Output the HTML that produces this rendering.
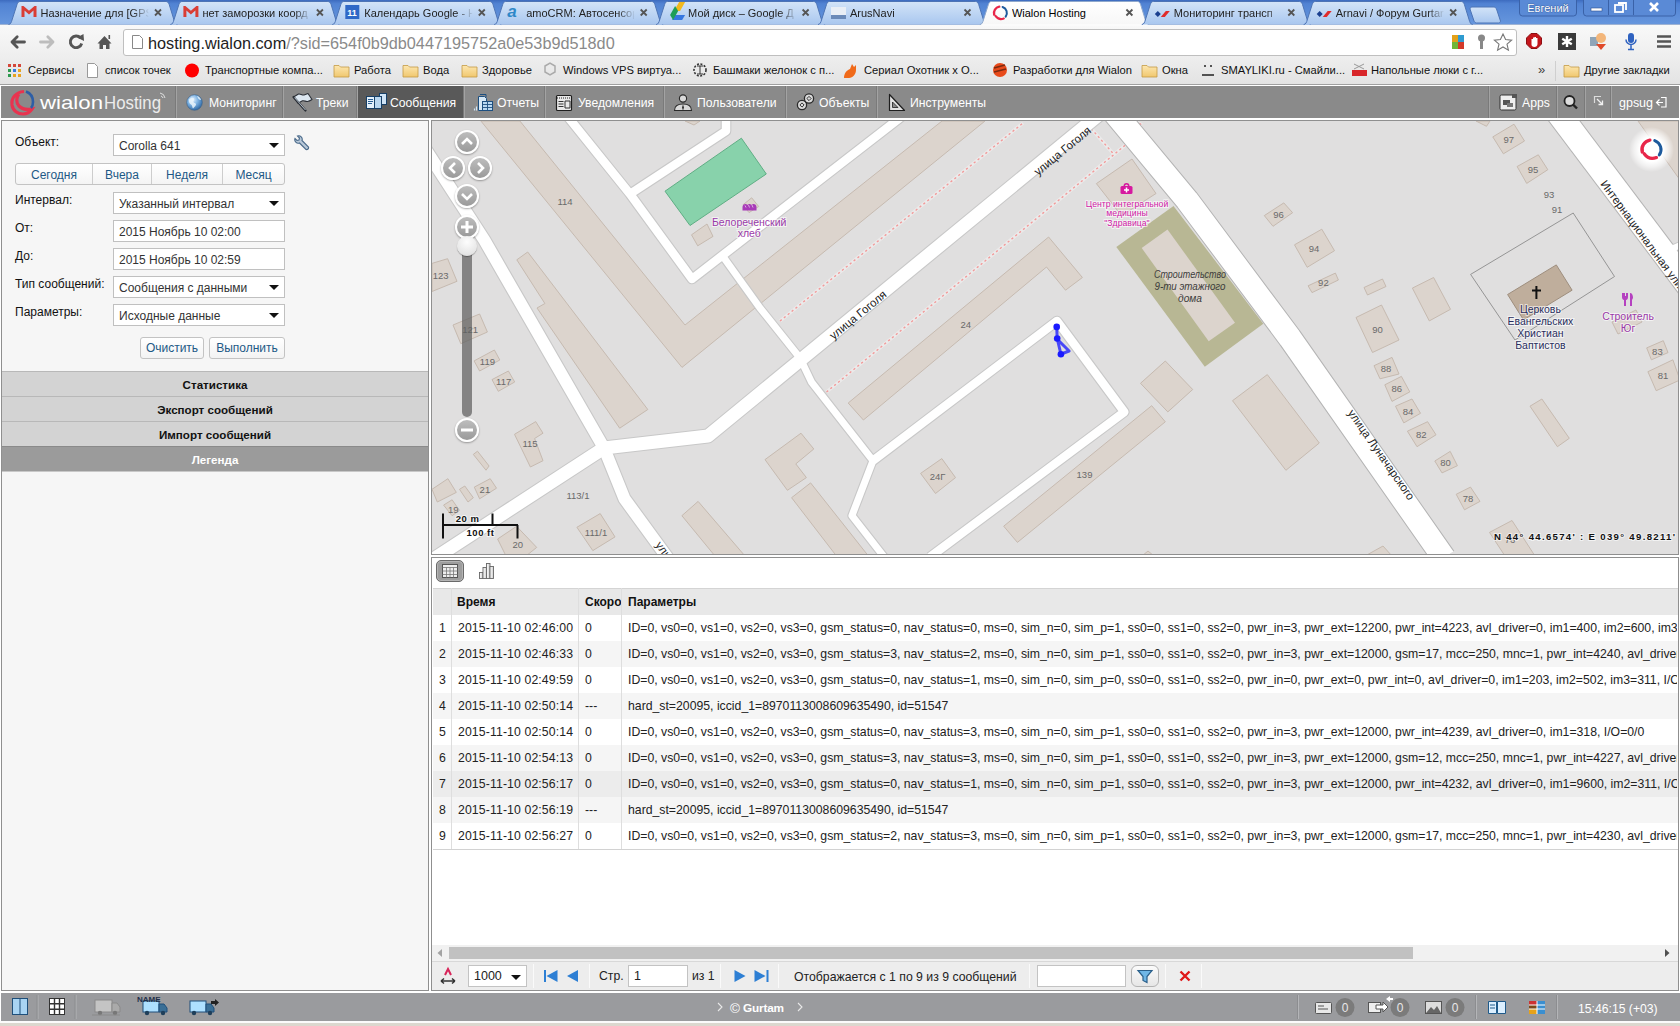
<!DOCTYPE html>
<html><head><meta charset="utf-8">
<style>
*{margin:0;padding:0;box-sizing:border-box}
html,body{width:1680px;height:1026px;overflow:hidden;background:#fff;font-family:"Liberation Sans",sans-serif;font-size:12px;color:#000}
svg text{font-family:"Liberation Sans",sans-serif}
.a{position:absolute}
.lbl{position:absolute;left:15px;font-size:12px;color:#111;white-space:nowrap}
.sel{position:absolute;left:113px;width:172px;height:22px;background:#fff;border:1px solid #c0c0c0;font-size:12px;color:#333;line-height:22px;padding-left:5px;white-space:nowrap}
.sel .arr{position:absolute;right:5px;top:8px;width:0;height:0;border-left:5px solid transparent;border-right:5px solid transparent;border-top:5px solid #111}
.btn{position:absolute;height:22px;border:1px solid #c3c3c3;border-radius:3px;background:linear-gradient(#ffffff,#f3f3f3);color:#1d5986;font-size:12px;line-height:21px;text-align:center;white-space:nowrap}
.acc{position:absolute;left:2px;width:426px;height:25px;background:#d3d3d3;border-top:1px solid #b8b8b8;font-weight:bold;font-size:11.6px;text-align:center;line-height:26px;color:#111}
.th{font-weight:bold;font-size:12px;color:#111;white-space:nowrap}
.td{font-size:12.25px;color:#222;white-space:nowrap}
.pb{position:absolute;width:24px;height:24px;border-radius:50%;background:linear-gradient(#bdbdbd,#9a9a9a);border:2px solid #fff;box-shadow:0 1px 2px rgba(0,0,0,.35)}
.pb svg{position:absolute;left:-2px;top:-2px}
.sep{position:absolute;width:1px;background:#d0d0d0;border-right:1px solid #fafafa}
.badge{position:absolute;width:19px;height:19px;border-radius:50%;background:#7d7d7d;color:#e8e8e8;font-size:12px;text-align:center;line-height:19px}
</style></head><body>

<svg class="a" style="left:0;top:0" width="1680" height="57" viewBox="0 0 1680 57">
<defs><linearGradient id="fr" x1="0" y1="0" x2="0" y2="1"><stop offset="0" stop-color="#3d6bbf"/><stop offset=".15" stop-color="#5183d3"/><stop offset="1" stop-color="#6797de"/></linearGradient><linearGradient id="tb" x1="0" y1="0" x2="0" y2="1"><stop offset="0" stop-color="#d3e4f8"/><stop offset="1" stop-color="#a9c7ef"/></linearGradient><linearGradient id="ta" x1="0" y1="0" x2="0" y2="1"><stop offset="0" stop-color="#ffffff"/><stop offset="1" stop-color="#f7f7f7"/></linearGradient><linearGradient id="fade" x1="0" y1="0" x2="1" y2="0"><stop offset="0" stop-color="#bcd5f4" stop-opacity="0"/><stop offset="1" stop-color="#bcd5f4" stop-opacity="1"/></linearGradient><linearGradient id="tbar" x1="0" y1="0" x2="0" y2="1"><stop offset="0" stop-color="#f9f9f9"/><stop offset="1" stop-color="#eeeeee"/></linearGradient></defs>
<rect x="0" y="0" width="1680" height="25" fill="url(#fr)"/>
<rect x="0" y="24" width="1680" height="33" fill="url(#tbar)"/>
<rect x="0" y="24" width="1680" height="1" fill="#9fb3d3"/>
<path d="M8.5,24.5 C10.5,24.5 11.5,22 12.0,20 L17.0,4.5 C17.7,2.5 18.5,1.5 20.0,1.5 L166.0,1.5 C167.5,1.5 168.5,2.5 169.2,4.5 L174.0,20 C174.5,22 175.5,24.5 177.5,24.5" fill="url(#tb)" stroke="#4d74b5" stroke-width="1"/>
<path d="M21.5,6 v11 h3 v-6.5 l4.5,4 4.5,-4 v6.5 h3 v-11 h-2 l-5.5,4.8 -5.5,-4.8z" fill="#d93d35"/>
<defs><linearGradient id="mg0" gradientUnits="userSpaceOnUse" x1="132.5" y1="0" x2="149.5" y2="0"><stop offset="0" stop-color="#fff"/><stop offset="1" stop-color="#000"/></linearGradient><mask id="mk0" maskUnits="userSpaceOnUse" x="0" y="0" width="1680" height="25"><rect x="38.5" y="0" width="120" height="25" fill="url(#mg0)"/></mask></defs>
<text x="40.5" y="16.5" font-size="11" fill="#222" clip-path="url(#tc0)" mask="url(#mk0)">Назначение для [GPS</text>
<defs><linearGradient id="fd0" x1="0" y1="0" x2="1" y2="0"><stop offset=".8" stop-color="#fff"/><stop offset="1" stop-color="#fff" stop-opacity="0"/></linearGradient><clipPath id="tc0"><rect x="40.5" y="0" width="108" height="25"/></clipPath></defs>
<path d="M155.0,9.5 l6,6 M161.0,9.5 l-6,6" stroke="#555" stroke-width="1.8"/>
<path d="M170.4,24.5 C172.4,24.5 173.4,22 173.9,20 L178.9,4.5 C179.6,2.5 180.4,1.5 181.9,1.5 L327.9,1.5 C329.4,1.5 330.4,2.5 331.1,4.5 L335.9,20 C336.4,22 337.4,24.5 339.4,24.5" fill="url(#tb)" stroke="#4d74b5" stroke-width="1"/>
<path d="M183.4,6 v11 h3 v-6.5 l4.5,4 4.5,-4 v6.5 h3 v-11 h-2 l-5.5,4.8 -5.5,-4.8z" fill="#d93d35"/>
<defs><linearGradient id="mg1" gradientUnits="userSpaceOnUse" x1="294.4" y1="0" x2="311.4" y2="0"><stop offset="0" stop-color="#fff"/><stop offset="1" stop-color="#000"/></linearGradient><mask id="mk1" maskUnits="userSpaceOnUse" x="0" y="0" width="1680" height="25"><rect x="200.4" y="0" width="120" height="25" fill="url(#mg1)"/></mask></defs>
<text x="202.4" y="16.5" font-size="11" fill="#222" clip-path="url(#tc1)" mask="url(#mk1)">нет заморозки коорд</text>
<defs><linearGradient id="fd1" x1="0" y1="0" x2="1" y2="0"><stop offset=".8" stop-color="#fff"/><stop offset="1" stop-color="#fff" stop-opacity="0"/></linearGradient><clipPath id="tc1"><rect x="202.4" y="0" width="108" height="25"/></clipPath></defs>
<path d="M316.9,9.5 l6,6 M322.9,9.5 l-6,6" stroke="#555" stroke-width="1.8"/>
<path d="M332.3,24.5 C334.3,24.5 335.3,22 335.8,20 L340.8,4.5 C341.5,2.5 342.3,1.5 343.8,1.5 L489.8,1.5 C491.3,1.5 492.3,2.5 493.0,4.5 L497.8,20 C498.3,22 499.3,24.5 501.3,24.5" fill="url(#tb)" stroke="#4d74b5" stroke-width="1"/>
<rect x="345.3" y="5" width="14" height="14" fill="#2f68c7"/><text x="347.3" y="16" font-size="9" fill="#fff" font-weight="bold">11</text>
<defs><linearGradient id="mg2" gradientUnits="userSpaceOnUse" x1="456.3" y1="0" x2="473.3" y2="0"><stop offset="0" stop-color="#fff"/><stop offset="1" stop-color="#000"/></linearGradient><mask id="mk2" maskUnits="userSpaceOnUse" x="0" y="0" width="1680" height="25"><rect x="362.3" y="0" width="120" height="25" fill="url(#mg2)"/></mask></defs>
<text x="364.3" y="16.5" font-size="11" fill="#222" clip-path="url(#tc2)" mask="url(#mk2)">Календарь Google - Н</text>
<defs><linearGradient id="fd2" x1="0" y1="0" x2="1" y2="0"><stop offset=".8" stop-color="#fff"/><stop offset="1" stop-color="#fff" stop-opacity="0"/></linearGradient><clipPath id="tc2"><rect x="364.3" y="0" width="108" height="25"/></clipPath></defs>
<path d="M478.8,9.5 l6,6 M484.8,9.5 l-6,6" stroke="#555" stroke-width="1.8"/>
<path d="M494.2,24.5 C496.2,24.5 497.2,22 497.7,20 L502.7,4.5 C503.4,2.5 504.2,1.5 505.7,1.5 L651.7,1.5 C653.2,1.5 654.2,2.5 654.9,4.5 L659.7,20 C660.2,22 661.2,24.5 663.2,24.5" fill="url(#tb)" stroke="#4d74b5" stroke-width="1"/>
<text x="507.20000000000005" y="17" font-size="17" fill="#2f88c8" font-style="italic" font-weight="bold">a</text>
<defs><linearGradient id="mg3" gradientUnits="userSpaceOnUse" x1="618.2" y1="0" x2="635.2" y2="0"><stop offset="0" stop-color="#fff"/><stop offset="1" stop-color="#000"/></linearGradient><mask id="mk3" maskUnits="userSpaceOnUse" x="0" y="0" width="1680" height="25"><rect x="524.2" y="0" width="120" height="25" fill="url(#mg3)"/></mask></defs>
<text x="526.2" y="16.5" font-size="11" fill="#222" clip-path="url(#tc3)" mask="url(#mk3)">amoCRM: Автосенсор</text>
<defs><linearGradient id="fd3" x1="0" y1="0" x2="1" y2="0"><stop offset=".8" stop-color="#fff"/><stop offset="1" stop-color="#fff" stop-opacity="0"/></linearGradient><clipPath id="tc3"><rect x="526.2" y="0" width="108" height="25"/></clipPath></defs>
<path d="M640.7,9.5 l6,6 M646.7,9.5 l-6,6" stroke="#555" stroke-width="1.8"/>
<path d="M656.1,24.5 C658.1,24.5 659.1,22 659.6,20 L664.6,4.5 C665.3,2.5 666.1,1.5 667.6,1.5 L813.6,1.5 C815.1,1.5 816.1,2.5 816.8,4.5 L821.6,20 C822.1,22 823.1,24.5 825.1,24.5" fill="url(#tb)" stroke="#4d74b5" stroke-width="1"/>
<path d="M674.1,11 l5,-9 h6 l-5,9z" fill="#f2b81c"/><path d="M672.1,20 l3,-5 h10 l-3,5z" fill="#3677e0"/><path d="M675.1,6 l-5,9 3,5 5,-9z" fill="#1e9e57"/>
<defs><linearGradient id="mg4" gradientUnits="userSpaceOnUse" x1="780.1" y1="0" x2="797.1" y2="0"><stop offset="0" stop-color="#fff"/><stop offset="1" stop-color="#000"/></linearGradient><mask id="mk4" maskUnits="userSpaceOnUse" x="0" y="0" width="1680" height="25"><rect x="686.1" y="0" width="120" height="25" fill="url(#mg4)"/></mask></defs>
<text x="688.1" y="16.5" font-size="11" fill="#222" clip-path="url(#tc4)" mask="url(#mk4)">Мой диск – Google Д</text>
<defs><linearGradient id="fd4" x1="0" y1="0" x2="1" y2="0"><stop offset=".8" stop-color="#fff"/><stop offset="1" stop-color="#fff" stop-opacity="0"/></linearGradient><clipPath id="tc4"><rect x="688.1" y="0" width="108" height="25"/></clipPath></defs>
<path d="M802.6,9.5 l6,6 M808.6,9.5 l-6,6" stroke="#555" stroke-width="1.8"/>
<path d="M818.0,24.5 C820.0,24.5 821.0,22 821.5,20 L826.5,4.5 C827.2,2.5 828.0,1.5 829.5,1.5 L975.5,1.5 C977.0,1.5 978.0,2.5 978.7,4.5 L983.5,20 C984.0,22 985.0,24.5 987.0,24.5" fill="url(#tb)" stroke="#4d74b5" stroke-width="1"/>
<rect x="831.0" y="7" width="15" height="12" fill="#e9eef5"/><path d="M831.0,15 h15 v4 h-15z" fill="#6b8ab8"/>
<defs><linearGradient id="mg5" gradientUnits="userSpaceOnUse" x1="942.0" y1="0" x2="959.0" y2="0"><stop offset="0" stop-color="#fff"/><stop offset="1" stop-color="#000"/></linearGradient><mask id="mk5" maskUnits="userSpaceOnUse" x="0" y="0" width="1680" height="25"><rect x="848.0" y="0" width="120" height="25" fill="url(#mg5)"/></mask></defs>
<text x="850.0" y="16.5" font-size="11" fill="#222" clip-path="url(#tc5)" mask="url(#mk5)">ArusNavi</text>
<defs><linearGradient id="fd5" x1="0" y1="0" x2="1" y2="0"><stop offset=".8" stop-color="#fff"/><stop offset="1" stop-color="#fff" stop-opacity="0"/></linearGradient><clipPath id="tc5"><rect x="850.0" y="0" width="108" height="25"/></clipPath></defs>
<path d="M964.5,9.5 l6,6 M970.5,9.5 l-6,6" stroke="#555" stroke-width="1.8"/>
<path d="M979.9,24.5 C981.9,24.5 982.9,22 983.4,20 L988.4,4.5 C989.1,2.5 989.9,1.5 991.4,1.5 L1137.4,1.5 C1138.9,1.5 1139.9,2.5 1140.6,4.5 L1145.4,20 C1145.9,22 1146.9,24.5 1148.9,24.5" fill="url(#ta)" stroke="#8fa8cc" stroke-width="1"/>
<rect x="981.4" y="24" width="166.0" height="2" fill="#fbfbfb"/>
<g transform="translate(1000.4,13.0) scale(.68) translate(-21.5,-21.5)"><path d="M19.85,12.14 A9.5,9.5 0 0 0 12.32,23.96" fill="none" stroke="#e8264a" stroke-width="3.4" stroke-linecap="round"/><path d="M14.2,25.8 Q19,32.5 26.5,29.6" fill="none" stroke="#e8264a" stroke-width="3.2" stroke-linecap="round"/><path d="M24.75,12.57 A9.5,9.5 0 0 1 29.28,26.95" fill="none" stroke="#1d5a9c" stroke-width="3" stroke-linecap="round"/></g>
<text x="1011.9" y="16.5" font-size="11" fill="#000" clip-path="url(#tc6)">Wialon Hosting</text>
<defs><linearGradient id="fd6" x1="0" y1="0" x2="1" y2="0"><stop offset=".8" stop-color="#fff"/><stop offset="1" stop-color="#fff" stop-opacity="0"/></linearGradient><clipPath id="tc6"><rect x="1011.9" y="0" width="76" height="25"/></clipPath></defs>
<path d="M1126.4,9.5 l6,6 M1132.4,9.5 l-6,6" stroke="#555" stroke-width="1.8"/>
<path d="M1141.8,24.5 C1143.8,24.5 1144.8,22 1145.3,20 L1150.3,4.5 C1151.0,2.5 1151.8,1.5 1153.3,1.5 L1299.3,1.5 C1300.8,1.5 1301.8,2.5 1302.5,4.5 L1307.3,20 C1307.8,22 1308.8,24.5 1310.8,24.5" fill="url(#tb)" stroke="#4d74b5" stroke-width="1"/>
<path d="M1154.8,14 l3,-3 3,3 -3,3z" fill="#1b3f8f"/><path d="M1160.8,17 l5,-6 h4 l-5,6z" fill="#e02b2b"/>
<defs><linearGradient id="mg7" gradientUnits="userSpaceOnUse" x1="1265.8" y1="0" x2="1282.8" y2="0"><stop offset="0" stop-color="#fff"/><stop offset="1" stop-color="#000"/></linearGradient><mask id="mk7" maskUnits="userSpaceOnUse" x="0" y="0" width="1680" height="25"><rect x="1171.8" y="0" width="120" height="25" fill="url(#mg7)"/></mask></defs>
<text x="1173.8" y="16.5" font-size="11" fill="#222" clip-path="url(#tc7)" mask="url(#mk7)">Мониторинг трансп</text>
<defs><linearGradient id="fd7" x1="0" y1="0" x2="1" y2="0"><stop offset=".8" stop-color="#fff"/><stop offset="1" stop-color="#fff" stop-opacity="0"/></linearGradient><clipPath id="tc7"><rect x="1173.8" y="0" width="108" height="25"/></clipPath></defs>
<path d="M1288.3,9.5 l6,6 M1294.3,9.5 l-6,6" stroke="#555" stroke-width="1.8"/>
<path d="M1303.7,24.5 C1305.7,24.5 1306.7,22 1307.2,20 L1312.2,4.5 C1312.9,2.5 1313.7,1.5 1315.2,1.5 L1461.2,1.5 C1462.7,1.5 1463.7,2.5 1464.4,4.5 L1469.2,20 C1469.7,22 1470.7,24.5 1472.7,24.5" fill="url(#tb)" stroke="#4d74b5" stroke-width="1"/>
<path d="M1316.7,14 l3,-3 3,3 -3,3z" fill="#1b3f8f"/><path d="M1322.7,17 l5,-6 h4 l-5,6z" fill="#e02b2b"/>
<defs><linearGradient id="mg8" gradientUnits="userSpaceOnUse" x1="1427.7" y1="0" x2="1444.7" y2="0"><stop offset="0" stop-color="#fff"/><stop offset="1" stop-color="#000"/></linearGradient><mask id="mk8" maskUnits="userSpaceOnUse" x="0" y="0" width="1680" height="25"><rect x="1333.7" y="0" width="120" height="25" fill="url(#mg8)"/></mask></defs>
<text x="1335.7" y="16.5" font-size="11" fill="#222" clip-path="url(#tc8)" mask="url(#mk8)">Arnavi / Форум Gurtan</text>
<defs><linearGradient id="fd8" x1="0" y1="0" x2="1" y2="0"><stop offset=".8" stop-color="#fff"/><stop offset="1" stop-color="#fff" stop-opacity="0"/></linearGradient><clipPath id="tc8"><rect x="1335.7" y="0" width="108" height="25"/></clipPath></defs>
<path d="M1450.2,9.5 l6,6 M1456.2,9.5 l-6,6" stroke="#555" stroke-width="1.8"/>
<path d="M1474,21 l-4,-12 c0,-1 1,-2 2,-2 h22 c1,0 2,1 2.5,2 l4,12 c0,1 -1,2 -2,2 h-22 c-1,0 -2,-1 -2.5,-2z" fill="url(#tb)" stroke="#4d74b5"/>
<rect x="1519.5" y="-3" width="57" height="19" rx="3" fill="#5a8ad6" stroke="#3a62a8"/>
<text x="1548" y="12" font-size="11" fill="#fff" text-anchor="middle" stroke="#2c4f8f" stroke-width=".6" paint-order="stroke">Евгений</text>
<rect x="1583.5" y="-3" width="92" height="19" rx="3" fill="#5a8ad6" stroke="#3a62a8"/>
<path d="M1608.5,0v15M1633.5,0v15" stroke="#3a62a8"/>
<rect x="1591" y="8" width="11" height="3" fill="#fff" stroke="#2c4f8f" stroke-width=".6"/>
<rect x="1615" y="5" width="8" height="7" fill="none" stroke="#fff" stroke-width="1.8"/><path d="M1618,3h8v7" fill="none" stroke="#fff" stroke-width="1.8"/>
<path d="M1650,3l8,8M1658,3l-8,8" stroke="#fff" stroke-width="2.6"/>
<path d="M12,42h12.5M12,42l5.2,-5.2M12,42l5.2,5.2" stroke="#555" stroke-width="2.8" fill="none" stroke-linecap="round"/>
<path d="M40.5,42h12.5M53,42l-5.2,-5.2M53,42l-5.2,5.2" stroke="#bdbdbd" stroke-width="2.8" fill="none" stroke-linecap="round"/>
<path d="M80.5,38 a5.8,5.8 0 1 0 1.2,5.5" stroke="#555" stroke-width="2.9" fill="none"/><path d="M77,37.5 l6.5,-3.5 0.5,7z" fill="#555"/>
<path d="M97.5,43.5 l7,-7.5 7,7.5h-2v5.5h-3.5v-4h-3v4h-3.5v-5.5z" fill="#555"/><rect x="108.5" y="35" width="1.6" height="4" fill="#555"/>
<rect x="123.5" y="29.5" width="1393" height="26" rx="2.5" fill="#fff" stroke="#bfbfbf"/>
<path d="M132.5,35.5h7l3,3v10h-10z" fill="#fff" stroke="#888"/>
<text x="148" y="48.5" font-size="16.25" fill="#222">hosting.wialon.com<tspan fill="#8a8a8a">/?sid=654f0b9db0447195752a0e53b9d518d0</tspan></text>
<rect x="1452" y="35" width="6" height="7" fill="#e3a21a"/><rect x="1458" y="35" width="6" height="7" fill="#2f9bd0"/><rect x="1452" y="42" width="6" height="7" fill="#6fb637"/><rect x="1458" y="42" width="6" height="7" fill="#d23a2a"/>
<circle cx="1481.5" cy="38" r="3.5" fill="#888"/><rect x="1480" y="40" width="3" height="9" fill="#888"/>
<path d="M1503,34 l2.6,5.6 6,.6 -4.6,4 1.4,6 -5.4,-3.2 -5.4,3.2 1.4,-6 -4.6,-4 6,-.6z" fill="#fff" stroke="#777" stroke-width="1.1"/>
<path d="M1531,33.5h6l4.5,4.5v6l-4.5,4.5h-6l-4.5,-4.5v-6z" fill="#c4161c" stroke="#8d0f13"/><path d="M1531.5,45 v-6 h1.5v4 v-5.5h1.5v5 v-5.5h1.5v5.5 v-4.5h1.5v6 c0,2 -1.5,3 -3,3 c-2,0 -3,-1 -3,-2.5z" fill="#fff"/>
<rect x="1558" y="33" width="18" height="17" fill="#3a3a3a"/><path d="M1567,36v11M1562.2,38.7l9.6,5.6M1562.2,44.3l9.6,-5.6" stroke="#fff" stroke-width="2.4"/>
<rect x="1590" y="37" width="8" height="9" fill="#8fa5b8"/><circle cx="1601" cy="38" r="5" fill="#f3b67a"/><path d="M1596,44h10l-5,6z" fill="#e04a2a"/>
<rect x="1628" y="33" width="6" height="10" rx="3" fill="#2f62c0"/><path d="M1626,39.5a5,5 0 0 0 10,0M1631,45v4M1628,49.5h6" stroke="#2f62c0" stroke-width="1.5" fill="none"/>
<path d="M1657,36.5h14M1657,41.5h14M1657,46.5h14" stroke="#555" stroke-width="2.6"/>
</svg>
<svg class="a" style="left:0;top:57px" width="1680" height="29" viewBox="0 57 1680 29">
<defs><linearGradient id="bmg" x1="0" y1="0" x2="0" y2="1"><stop offset="0" stop-color="#eeeeee"/><stop offset="1" stop-color="#e3e3e3"/></linearGradient><linearGradient id="fold" x1="0" y1="0" x2="0" y2="1"><stop offset="0" stop-color="#fde7b0"/><stop offset="1" stop-color="#f0c76e"/></linearGradient></defs>
<rect x="0" y="57" width="1680" height="27" fill="url(#bmg)"/>
<rect x="0" y="84" width="1680" height="1" fill="#a0a0a0"/>
<rect x="0" y="85" width="1680" height="1" fill="#ffffff"/>
<text x="28" y="74" font-size="11.2" fill="#111">Сервисы</text>
<rect x="8" y="64" width="3" height="3" fill="#d4473a"/>
<rect x="13" y="64" width="3" height="3" fill="#d4473a"/>
<rect x="18" y="64" width="3" height="3" fill="#d4473a"/>
<rect x="8" y="69" width="3" height="3" fill="#2e9a4f"/>
<rect x="13" y="69" width="3" height="3" fill="#3a7be0"/>
<rect x="18" y="69" width="3" height="3" fill="#e8a322"/>
<rect x="8" y="74" width="3" height="3" fill="#2e9a4f"/>
<rect x="13" y="74" width="3" height="3" fill="#e8a322"/>
<rect x="18" y="74" width="3" height="3" fill="#e8a322"/>
<text x="105" y="74" font-size="11.2" fill="#111">список точек</text>
<path d="M87.5,63.5h7l3,3v11h-10z" fill="#fff" stroke="#999"/>
<text x="205" y="74" font-size="11.2" fill="#111">Транспортные компа...</text>
<circle cx="192" cy="70.5" r="7" fill="#f00"/>
<text x="354" y="74" font-size="11.2" fill="#111">Работа</text>
<path d="M334,65.5h5l1.5,1.5h8.5v10h-15z" fill="url(#fold)" stroke="#c49a45" stroke-width=".8"/>
<text x="423" y="74" font-size="11.2" fill="#111">Вода</text>
<path d="M403,65.5h5l1.5,1.5h8.5v10h-15z" fill="url(#fold)" stroke="#c49a45" stroke-width=".8"/>
<text x="482" y="74" font-size="11.2" fill="#111">Здоровье</text>
<path d="M462,65.5h5l1.5,1.5h8.5v10h-15z" fill="url(#fold)" stroke="#c49a45" stroke-width=".8"/>
<text x="563" y="74" font-size="11.2" fill="#111">Windows VPS виртуа...</text>
<path d="M545,66l5,-3 5,3v6l-5,3 -5,-3z" fill="none" stroke="#aaa" stroke-width="1.5"/>
<text x="713" y="74" font-size="11.2" fill="#111">Башмаки желонок с п...</text>
<circle cx="700" cy="70" r="6" fill="none" stroke="#333" stroke-width="1.6" stroke-dasharray="2,1.5"/><path d="M700,66v8M697,66h6M697,74h6" stroke="#333"/>
<text x="864" y="74" font-size="11.2" fill="#111">Сериал Охотник x О...</text>
<path d="M844,78 c0,-5 3,-8 6,-9 l2,-5 2,3 2,-2 v5 c0,4 -3,8 -7,8z" fill="#f06a1a"/>
<text x="1013" y="74" font-size="11.2" fill="#111">Разработки для Wialon</text>
<circle cx="1000" cy="70" r="7" fill="#e84a1a"/><path d="M994,68 l11,-3 M994,72 l12,-3" stroke="#7a2a10" stroke-width="1.5"/>
<text x="1162" y="74" font-size="11.2" fill="#111">Окна</text>
<path d="M1142,65.5h5l1.5,1.5h8.5v10h-15z" fill="url(#fold)" stroke="#c49a45" stroke-width=".8"/>
<text x="1221" y="74" font-size="11.2" fill="#111">SMAYLIKI.ru - Смайли...</text>
<path d="M1202,75h12M1205,65v2M1211,65v2" stroke="#222" stroke-width="1.5"/>
<text x="1371" y="74" font-size="11.2" fill="#111">Напольные люки с г...</text>
<rect x="1352" y="70" width="15" height="6" fill="#d8262a"/><path d="M1354,64l10,5M1364,64l-10,5" stroke="#999"/>
<text x="1584" y="74" font-size="11.2" fill="#111">Другие закладки</text>
<path d="M1564,65.5h5l1.5,1.5h8.5v10h-15z" fill="url(#fold)" stroke="#c49a45" stroke-width=".8"/>
<text x="1538" y="74" font-size="13" fill="#444">»</text>
<rect x="1555" y="61" width="1" height="20" fill="#cfcfcf"/>
</svg>
<svg class="a" style="left:0;top:86px" width="1680" height="34" viewBox="0 86 1680 34">
<rect x="0" y="86" width="1680" height="34" fill="#ffffff"/>
<rect x="1" y="86" width="1678" height="32" fill="#8a8a8a"/>
<rect x="358" y="86" width="106" height="32" fill="#595959"/>
<rect x="176" y="86" width="1" height="32" fill="#a3a3a3"/>
<rect x="175" y="86" width="1" height="32" fill="#7a7a7a"/>
<rect x="283" y="86" width="1" height="32" fill="#a3a3a3"/>
<rect x="282" y="86" width="1" height="32" fill="#7a7a7a"/>
<rect x="357" y="86" width="1" height="32" fill="#a3a3a3"/>
<rect x="356" y="86" width="1" height="32" fill="#7a7a7a"/>
<rect x="464" y="86" width="1" height="32" fill="#a3a3a3"/>
<rect x="463" y="86" width="1" height="32" fill="#7a7a7a"/>
<rect x="545" y="86" width="1" height="32" fill="#a3a3a3"/>
<rect x="544" y="86" width="1" height="32" fill="#7a7a7a"/>
<rect x="664" y="86" width="1" height="32" fill="#a3a3a3"/>
<rect x="663" y="86" width="1" height="32" fill="#7a7a7a"/>
<rect x="786" y="86" width="1" height="32" fill="#a3a3a3"/>
<rect x="785" y="86" width="1" height="32" fill="#7a7a7a"/>
<rect x="877" y="86" width="1" height="32" fill="#a3a3a3"/>
<rect x="876" y="86" width="1" height="32" fill="#7a7a7a"/>
<rect x="1489" y="86" width="1" height="32" fill="#a3a3a3"/>
<rect x="1488" y="86" width="1" height="32" fill="#7a7a7a"/>
<rect x="1557" y="86" width="1" height="32" fill="#a3a3a3"/>
<rect x="1556" y="86" width="1" height="32" fill="#7a7a7a"/>
<rect x="1585" y="86" width="1" height="32" fill="#a3a3a3"/>
<rect x="1584" y="86" width="1" height="32" fill="#7a7a7a"/>
<rect x="1611" y="86" width="1" height="32" fill="#a3a3a3"/>
<rect x="1610" y="86" width="1" height="32" fill="#7a7a7a"/>
<path d="M24,91.5 C16,92 11,98 12,105 C13,111 18,114 23,114 C27,114 30,112 32,109 C27,110 22,109 19,106 C16,103 16,97 19,94" fill="none" stroke="#e8334f" stroke-width="3.2"/>
<path d="M26,91.5 C30,93 33,97 33,102 C33,105 32,107 31,108" fill="none" stroke="#2d5ea6" stroke-width="2.6"/>
<text x="40" y="109" font-size="19" fill="#fff" textLength="63" lengthAdjust="spacingAndGlyphs">wialon</text>
<text x="104" y="109" font-size="19" fill="#ececec" textLength="57" lengthAdjust="spacingAndGlyphs">Hosting</text>
<path d="M160,93 a6,6 0 0 1 5,5 M161,96 a3,3 0 0 1 2,2" stroke="#e0e0e0" stroke-width="1" fill="none"/>
<text x="209" y="106.5" font-size="12.2" fill="#fff">Мониторинг</text>
<text x="316" y="106.5" font-size="12.2" fill="#fff">Треки</text>
<text x="390" y="106.5" font-size="12.2" fill="#fff">Сообщения</text>
<text x="497" y="106.5" font-size="12.2" fill="#fff">Отчеты</text>
<text x="578" y="106.5" font-size="12.2" fill="#fff">Уведомления</text>
<text x="697" y="106.5" font-size="12.2" fill="#fff">Пользователи</text>
<text x="819" y="106.5" font-size="12.2" fill="#fff">Объекты</text>
<text x="910" y="106.5" font-size="12.2" fill="#fff">Инструменты</text>
<text x="1522" y="106.5" font-size="12.2" fill="#fff">Apps</text>
<text x="1619" y="107" font-size="12.5" fill="#fff" textLength="34">gpsug</text>
<defs><radialGradient id="glb" cx=".38" cy=".32" r=".75"><stop offset="0" stop-color="#e6f3ff"/><stop offset=".45" stop-color="#7eb3e3"/><stop offset="1" stop-color="#255f9c"/></radialGradient></defs>
<circle cx="194.5" cy="102.5" r="7.8" fill="url(#glb)" stroke="#3a5f86" stroke-width=".6"/>
<path d="M189,99.5 c1.5,-2 4,-2.5 5,-1 c.8,1.5 -1,2 -.5,3.5 c.6,1.5 2.5,.5 2.5,2.5 c0,1.5 -2,2.5 -3,4 c-1,-1.5 -.5,-3 -2,-4 c-1.5,-1 -2.5,-2.5 -2,-5z M197,96 c2,.5 3.5,2 4,4 c-1.2,.2 -2.5,-.8 -3,-2z" fill="#eaf4fc" opacity=".85"/>
<path d="M293.5,97 l5,-3 c2,-.5 3.5,1.5 5.5,1 l4,-1.5 l4,6 c-1.5,1 -3,1.8 -4.5,2 c-2,.3 -3,-1.2 -5,-.7 l-4.5,2.5z" fill="#dce7f1" stroke="#2b2f36" stroke-width="1.1" stroke-linejoin="round"/>
<path d="M293.5,97 l12,13.5" stroke="#2b2f36" stroke-width="2.2" stroke-linecap="round"/><path d="M294.5,97.5 l11,12.5" stroke="#cfe0ee" stroke-width=".8"/>
<rect x="379.5" y="93.5" width="7" height="11" fill="#cfe3f5" stroke="#173f66"/>
<rect x="374.5" y="96.5" width="7" height="12" fill="#b9d6ef" stroke="#173f66"/>
<rect x="366.5" y="96.5" width="8" height="12" fill="#e4f0fa" stroke="#173f66"/><path d="M368,99.5h5M368,101.5h5M368,103.5h4" stroke="#2a5f94" stroke-width="1"/>
<path d="M478.5,110.5 v-14 h6 l2,2 v12z" fill="#d6e8f6" stroke="#1d4f80"/><path d="M480,94.5h6v3" fill="none" stroke="#1d4f80"/>
<rect x="482.5" y="101.5" width="10" height="9" fill="#b8d8f2" stroke="#1d4f80"/><path d="M482.5,104.5h10M482.5,107.5h10M487.5,101.5v9" stroke="#1d4f80" stroke-width=".9"/><path d="M476.5,110.5v-4M474.5,110.5v-2" stroke="#cfe4f5" stroke-width="1.2"/>
<rect x="556.5" y="95.5" width="15" height="15" rx="1" fill="#e9e9e9" stroke="#1e1e1e" stroke-width="1.2"/><path d="M557,98h14" stroke="#1e1e1e" stroke-width="1" stroke-dasharray="1,1"/>
<path d="M558.5,101.5h5M558.5,104h5M558.5,106.5h5M565,101h5v7h-5z" stroke="#333" stroke-width="1" fill="none"/>
<circle cx="683" cy="98.5" r="3.6" fill="#d9d9d9" stroke="#2a2a2a" stroke-width="1.1"/><path d="M674.5,110.5 c0,-4.5 3.5,-6.5 8.5,-6.5 s8.5,2 8.5,6.5z" fill="#d9d9d9" stroke="#2a2a2a" stroke-width="1.1"/><path d="M683,104.5l-1,3 1,3 1,-3z" fill="#2a2a2a"/>
<circle cx="802" cy="105" r="4.6" fill="#dcdcdc" stroke="#2a2a2a" stroke-width="1.3"/><circle cx="809" cy="98.5" r="4.6" fill="#dcdcdc" stroke="#2a2a2a" stroke-width="1.3"/><rect x="800.5" y="103.5" width="3" height="3" fill="none" stroke="#2a2a2a" stroke-width=".9" transform="rotate(45 802 105)"/><rect x="807.5" y="97" width="3" height="3" fill="none" stroke="#2a2a2a" stroke-width=".9" transform="rotate(45 809 98.5)"/>
<path d="M889.5,94.5 v16 h15z" fill="#e2e2e2" stroke="#1e1e1e" stroke-width="1.2" stroke-linejoin="round"/><path d="M892.5,102 v5.5 h5.5z" fill="#8a8a8a" stroke="#1e1e1e" stroke-width=".8"/>
<rect x="1500" y="95" width="16" height="15" rx="1.5" fill="#eee" stroke="#333"/><rect x="1503" y="100" width="7" height="5" fill="#555"/><rect x="1507" y="103" width="6" height="4" fill="#777"/><rect x="1512" y="94" width="5" height="4" fill="#555"/>
<circle cx="1569.5" cy="101" r="5" fill="#ddd" stroke="#222" stroke-width="1.8"/><path d="M1573,104.5l4,4" stroke="#222" stroke-width="2.4"/>
<path d="M1594.5,103v-6.5h6.5" stroke="#dcdcdc" stroke-width="1.2" fill="none"/><path d="M1597,99l5,5M1602.5,100.5v4h-4" stroke="#f0f0f0" stroke-width="1.3" fill="none"/>
<path d="M1661,97.5h5v9.5h-5M1656.5,102.5h6.5M1659.5,99.5l-3,3 3,3" stroke="#fff" stroke-width="1.2" fill="none"/>
</svg>

<!-- LEFT PANEL -->
<div class="a" style="left:1px;top:120px;width:428px;height:871px;background:#f6f6f6;border:1px solid #8f8f8f"></div>
<div class="lbl" style="top:135px">Объект:</div>
<div class="sel" style="top:134px">Corolla 641<div class="arr"></div></div>
<svg class="a" style="left:291px;top:135px" width="20" height="20" viewBox="0 0 20 20"><path d="M4,3.5 a3.5,3.5 0 0 0 4.5,4.5 l6.5,6.5 a2,2 0 0 0 2.5,-2.5 l-6.5,-6.5 a3.5,3.5 0 0 0 -4.5,-4.5 l2,2 -0.5,2 -2,.5z" fill="#b8c8d8" stroke="#4a6a8a" stroke-width="1.1"/></svg>
<div class="a" style="left:15px;top:163px;width:270px;height:22px;border:1px solid #c3c3c3;border-radius:3px;background:linear-gradient(#ffffff,#f4f4f4)"></div>
<div class="a" style="left:92px;top:164px;width:1px;height:20px;background:#cdcdcd"></div>
<div class="a" style="left:151px;top:164px;width:1px;height:20px;background:#cdcdcd"></div>
<div class="a" style="left:222px;top:164px;width:1px;height:20px;background:#cdcdcd"></div>
<div class="a" style="left:16px;top:168px;width:76px;text-align:center;color:#1d5986;font-size:12px">Сегодня</div>
<div class="a" style="left:93px;top:168px;width:58px;text-align:center;color:#1d5986;font-size:12px">Вчера</div>
<div class="a" style="left:152px;top:168px;width:70px;text-align:center;color:#1d5986;font-size:12px">Неделя</div>
<div class="a" style="left:223px;top:168px;width:61px;text-align:center;color:#1d5986;font-size:12px">Месяц</div>
<div class="lbl" style="top:193px">Интервал:</div>
<div class="sel" style="top:192px">Указанный интервал<div class="arr"></div></div>
<div class="lbl" style="top:221px">От:</div>
<div class="sel" style="top:220px">2015 Ноябрь 10 02:00</div>
<div class="lbl" style="top:249px">До:</div>
<div class="sel" style="top:248px">2015 Ноябрь 10 02:59</div>
<div class="lbl" style="top:277px">Тип сообщений:</div>
<div class="sel" style="top:276px">Сообщения с данными<div class="arr"></div></div>
<div class="lbl" style="top:305px">Параметры:</div>
<div class="sel" style="top:304px">Исходные данные<div class="arr"></div></div>
<div class="btn" style="left:140px;top:337px;width:64px">Очистить</div>
<div class="btn" style="left:209px;top:337px;width:76px">Выполнить</div>
<div class="acc" style="top:371px">Статистика</div>
<div class="acc" style="top:396px">Экспорт сообщений</div>
<div class="acc" style="top:421px">Импорт сообщений</div>
<div class="acc" style="top:446px;background:#9b9b9b;color:#fff;border-top:1px solid #8a8a8a">Легенда</div>
<div class="a" style="left:2px;top:471px;width:426px;height:1px;background:#c8c8c8"></div>

<!-- MAP -->
<div class="a" style="left:431px;top:120px;width:1248px;height:435px;border:1px solid #8f8f8f;background:#e0dfdf"></div>
<svg class="a" style="left:432px;top:121px" width="1246" height="433" viewBox="432 121 1246 433">
<rect x="432" y="121" width="1246" height="433" fill="#e0dfdf"/>
<polygon points="665.0,191.2 741.4,138.2 766.3,174.0 690.0,225.5" fill="#88d2ab" stroke="#5fae84" stroke-width="1" />
<polygon points="1116.3,246.9 1173.5,206.0 1263.3,323.8 1204.8,366.7" fill="#b8b794" stroke="none" stroke-width="1" />
<polygon points="1141.7,248.0 1167.5,229.5 1235.0,322.8 1208.7,341.3" fill="#dcd4cd" stroke="none" stroke-width="1" />
<polygon points="1470.6,274.4 1573.2,213.0 1614.5,276.5 1515.0,340.0" fill="none" stroke="#8c8c8c" stroke-width="0.9" />
<polygon points="480.9,121.0 519.9,121.0 685.0,325.0 942.0,121.0 985.0,121.0 682.0,367.4" fill="#dcd4cd" stroke="#c6bab0" stroke-width="1" />
<polygon points="516.8,259.8 527.7,252.0 647.8,409.5 619.7,428.2 537.0,308.0 544.9,303.5" fill="#dcd4cd" stroke="#c6bab0" stroke-width="1" />
<polygon points="848.2,403.0 1048.6,237.0 1082.4,277.5 1065.5,290.2 1046.5,267.0 863.4,420.0" fill="#dcd4cd" stroke="#c6bab0" stroke-width="1" />
<polygon points="1096.4,183.6 1132.0,159.0 1156.0,193.5 1121.5,215.7" fill="#dcd4cd" stroke="#c6bab0" stroke-width="1" />
<polygon points="691.5,234.8 707.0,224.0 713.0,236.4 697.7,245.8" fill="#dcd4cd" stroke="#c6bab0" stroke-width="1" />
<polygon points="743.0,204.8 751.7,197.8 758.7,206.5 749.0,212.6" fill="#dcd4cd" stroke="#c6bab0" stroke-width="1" />
<polygon points="685.0,121.0 700.0,121.0 694.0,125.0" fill="#dcd4cd" stroke="#c6bab0" stroke-width="1" />
<polygon points="432.0,263.4 447.6,258.7 457.0,281.3 432.0,291.5" fill="#dcd4cd" stroke="#c6bab0" stroke-width="1" />
<polygon points="453.0,325.0 479.6,314.0 487.4,332.0 460.8,343.7" fill="#dcd4cd" stroke="#c6bab0" stroke-width="1" />
<polygon points="474.1,360.9 494.4,350.0 499.8,360.0 479.6,371.0" fill="#dcd4cd" stroke="#c6bab0" stroke-width="1" />
<polygon points="492.0,379.6 508.4,371.0 514.7,382.0 498.3,391.3" fill="#dcd4cd" stroke="#c6bab0" stroke-width="1" />
<polygon points="514.5,434.3 535.7,421.6 543.0,433.2 534.6,438.5 543.0,460.7 530.4,467.0" fill="#dcd4cd" stroke="#c6bab0" stroke-width="1" />
<polygon points="473.3,454.4 477.5,451.2 489.1,466.0 486.0,470.2" fill="#dcd4cd" stroke="#c6bab0" stroke-width="1" />
<polygon points="432.0,489.3 447.9,478.7 456.3,492.4 437.3,502.0" fill="#dcd4cd" stroke="#c6bab0" stroke-width="1" />
<polygon points="459.5,489.3 464.8,486.0 473.3,497.7 468.0,502.0" fill="#dcd4cd" stroke="#c6bab0" stroke-width="1" />
<polygon points="474.3,487.1 490.2,478.7 496.5,488.2 479.6,498.8" fill="#dcd4cd" stroke="#c6bab0" stroke-width="1" />
<polygon points="443.6,505.1 452.1,499.8 459.5,510.4 452.1,515.7" fill="#dcd4cd" stroke="#c6bab0" stroke-width="1" />
<polygon points="497.6,539.0 516.6,526.3 536.7,547.4 526.0,556.0 506.0,556.0" fill="#dcd4cd" stroke="#c6bab0" stroke-width="1" />
<polygon points="576.9,527.3 600.2,513.6 615.0,536.9 592.8,550.6" fill="#dcd4cd" stroke="#c6bab0" stroke-width="1" />
<polygon points="765.0,459.6 801.0,433.2 813.8,449.0 795.8,463.9 806.4,477.6 787.4,490.3" fill="#dcd4cd" stroke="#c6bab0" stroke-width="1" />
<polygon points="791.6,497.7 810.6,482.9 870.0,558.0 838.0,558.0" fill="#dcd4cd" stroke="#c6bab0" stroke-width="1" />
<polygon points="920.6,473.4 941.8,458.6 955.5,477.6 935.5,493.5" fill="#dcd4cd" stroke="#c6bab0" stroke-width="1" />
<polygon points="1003.7,526.2 1151.7,405.7 1165.3,421.8 1017.4,542.4" fill="#dcd4cd" stroke="#c6bab0" stroke-width="1" />
<polygon points="1140.5,383.3 1165.3,361.0 1192.7,389.5 1167.8,411.9" fill="#dcd4cd" stroke="#c6bab0" stroke-width="1" />
<polygon points="1232.5,400.7 1267.3,374.6 1319.3,443.0 1285.9,470.3" fill="#dcd4cd" stroke="#c6bab0" stroke-width="1" />
<polygon points="1264.3,215.6 1283.8,202.9 1292.6,212.7 1273.0,226.3" fill="#dcd4cd" stroke="#c6bab0" stroke-width="1" />
<polygon points="1294.5,244.8 1321.8,229.2 1334.5,250.7 1307.2,267.3" fill="#dcd4cd" stroke="#c6bab0" stroke-width="1" />
<polygon points="1308.1,285.8 1335.4,273.1 1338.4,280.0 1312.0,292.6" fill="#dcd4cd" stroke="#c6bab0" stroke-width="1" />
<polygon points="1492.8,136.9 1514.0,124.2 1524.5,141.0 1503.4,153.8" fill="#dcd4cd" stroke="#c6bab0" stroke-width="1" />
<polygon points="1517.1,166.5 1538.3,154.8 1547.8,169.7 1526.7,183.4" fill="#dcd4cd" stroke="#c6bab0" stroke-width="1" />
<polygon points="1476.0,121.0 1490.0,121.0 1486.5,126.3" fill="#dcd4cd" stroke="#c6bab0" stroke-width="1" />
<polygon points="1356.0,317.5 1381.5,305.0 1399.0,340.0 1372.5,352.5" fill="#dcd4cd" stroke="#c6bab0" stroke-width="1" />
<polygon points="1412.4,288.1 1433.6,277.5 1450.5,309.3 1429.3,320.9" fill="#dcd4cd" stroke="#c6bab0" stroke-width="1" />
<polygon points="1364.0,287.5 1382.5,279.0 1386.0,286.5 1367.5,295.0" fill="#dcd4cd" stroke="#c6bab0" stroke-width="1" />
<polygon points="1374.0,365.7 1392.0,357.4 1399.0,374.0 1380.0,378.8" fill="#dcd4cd" stroke="#c6bab0" stroke-width="1" />
<polygon points="1384.8,384.8 1401.4,376.4 1409.8,391.9 1392.0,401.4" fill="#dcd4cd" stroke="#c6bab0" stroke-width="1" />
<polygon points="1395.5,406.2 1412.0,399.0 1420.5,413.3 1403.8,422.9" fill="#dcd4cd" stroke="#c6bab0" stroke-width="1" />
<polygon points="1407.4,431.2 1427.6,421.7 1436.0,434.8 1417.0,446.7" fill="#dcd4cd" stroke="#c6bab0" stroke-width="1" />
<polygon points="1434.8,461.0 1450.2,451.4 1457.4,465.7 1442.0,472.9" fill="#dcd4cd" stroke="#c6bab0" stroke-width="1" />
<polygon points="1456.2,494.3 1470.5,487.1 1480.0,501.4 1464.5,509.8" fill="#dcd4cd" stroke="#c6bab0" stroke-width="1" />
<polygon points="1489.5,532.4 1512.0,520.5 1535.0,556.0 1505.0,556.0" fill="#dcd4cd" stroke="#c6bab0" stroke-width="1" />
<polygon points="1646.7,347.9 1663.3,340.7 1668.0,352.6 1651.4,359.8" fill="#dcd4cd" stroke="#c6bab0" stroke-width="1" />
<polygon points="1647.9,371.7 1672.9,359.8 1680.0,380.0 1656.2,390.7" fill="#dcd4cd" stroke="#c6bab0" stroke-width="1" />
<polygon points="1530.0,406.2 1541.9,399.0 1569.3,438.3 1557.4,446.7" fill="#dcd4cd" stroke="#c6bab0" stroke-width="1" />
<polygon points="1638.0,121.0 1680.0,121.0 1680.0,180.0" fill="#dcd4cd" stroke="#c6bab0" stroke-width="1" />
<polygon points="1365.0,556.0 1383.0,546.0 1392.0,556.0" fill="#dcd4cd" stroke="#c6bab0" stroke-width="1" />
<polygon points="1142.0,556.0 1148.0,551.0 1154.0,556.0" fill="#dcd4cd" stroke="#c6bab0" stroke-width="1" />
<polygon points="681.9,515.7 698.1,501.4 745.0,556.0 715.0,556.0" fill="#dcd4cd" stroke="#c6bab0" stroke-width="1" />
<polygon points="1612.0,322.0 1636.0,310.0 1642.0,322.0 1618.0,334.0" fill="#dcd4cd" stroke="#c6bab0" stroke-width="1" />
<polygon points="1507.6,294.5 1556.3,264.9 1572.1,290.2 1523.5,319.9" fill="#bfae9c" stroke="#9e8e7e" stroke-width="1" />
<polyline points="780.0,321.0 1023.0,123.0" fill="none" stroke="#ffffff" stroke-opacity=".35" stroke-width="3.5"/>
<polyline points="780.0,321.0 1023.0,123.0" fill="none" stroke="#f29a9a" stroke-width="1.4" stroke-dasharray="2.2,2.8"/>
<polyline points="826.5,392.0 1126.2,144.4" fill="none" stroke="#ffffff" stroke-opacity=".35" stroke-width="3.5"/>
<polyline points="826.5,392.0 1126.2,144.4" fill="none" stroke="#f29a9a" stroke-width="1.4" stroke-dasharray="2.2,2.8"/>
<polyline points="1088.0,125.0 1113.3,153.7" fill="none" stroke="#ffffff" stroke-opacity=".35" stroke-width="3.5"/>
<polyline points="1088.0,125.0 1113.3,153.7" fill="none" stroke="#f29a9a" stroke-width="1.4" stroke-dasharray="2.2,2.8"/>
<polyline points="1135.0,121.0 1142.0,125.0" fill="none" stroke="#ffffff" stroke-opacity=".35" stroke-width="3.5"/>
<polyline points="1135.0,121.0 1142.0,125.0" fill="none" stroke="#f29a9a" stroke-width="1.4" stroke-dasharray="2.2,2.8"/>
<polyline points="400.0,110.0 484.3,240.0 604.0,448.0 624.5,498.8 675.0,568.0" fill="none" stroke="#c8c8c8" stroke-width="14.2" stroke-linejoin="round" stroke-linecap="butt"/>
<polyline points="425.0,564.5 604.0,448.0 708.0,436.0 1115.0,101.5" fill="none" stroke="#c8c8c8" stroke-width="15.2" stroke-linejoin="round" stroke-linecap="butt"/>
<polyline points="560.0,107.0 630.0,194.0 692.0,279.0 914.0,107.0" fill="none" stroke="#c8c8c8" stroke-width="10.7" stroke-linejoin="round" stroke-linecap="butt"/>
<polyline points="630.0,194.0 726.0,131.0 726.0,121.0" fill="none" stroke="#c8c8c8" stroke-width="10.7" stroke-linejoin="round" stroke-linecap="butt"/>
<polyline points="722.6,256.0 760.0,308.0 800.0,358.0 811.7,382.4 873.0,460.7 851.9,515.7 885.0,558.0" fill="none" stroke="#c8c8c8" stroke-width="9.2" stroke-linejoin="round" stroke-linecap="butt"/>
<polyline points="873.0,460.7 1057.0,321.0 1124.3,412.0 930.0,557.0" fill="none" stroke="#c8c8c8" stroke-width="10.7" stroke-linejoin="round" stroke-linecap="butt"/>
<polyline points="1103.0,99.0 1187.0,200.0 1290.0,338.0 1444.0,558.0" fill="none" stroke="#b4b4b4" stroke-width="25.0" stroke-linejoin="round" stroke-linecap="butt"/>
<polyline points="1550.0,102.0 1700.0,301.0" fill="none" stroke="#b4b4b4" stroke-width="26.0" stroke-linejoin="round" stroke-linecap="butt"/>
<polyline points="1665.0,252.0 1685.0,243.0" fill="none" stroke="#c8c8c8" stroke-width="8.2" stroke-linejoin="round" stroke-linecap="butt"/>
<polyline points="400.0,110.0 484.3,240.0 604.0,448.0 624.5,498.8 675.0,568.0" fill="none" stroke="#ffffff" stroke-width="12.0" stroke-linejoin="round" stroke-linecap="butt"/>
<polyline points="425.0,564.5 604.0,448.0 708.0,436.0 1115.0,101.5" fill="none" stroke="#ffffff" stroke-width="13.0" stroke-linejoin="round" stroke-linecap="butt"/>
<polyline points="560.0,107.0 630.0,194.0 692.0,279.0 914.0,107.0" fill="none" stroke="#ffffff" stroke-width="8.5" stroke-linejoin="round" stroke-linecap="butt"/>
<polyline points="630.0,194.0 726.0,131.0 726.0,121.0" fill="none" stroke="#ffffff" stroke-width="8.5" stroke-linejoin="round" stroke-linecap="butt"/>
<polyline points="722.6,256.0 760.0,308.0 800.0,358.0 811.7,382.4 873.0,460.7 851.9,515.7 885.0,558.0" fill="none" stroke="#ffffff" stroke-width="7.0" stroke-linejoin="round" stroke-linecap="butt"/>
<polyline points="873.0,460.7 1057.0,321.0 1124.3,412.0 930.0,557.0" fill="none" stroke="#ffffff" stroke-width="8.5" stroke-linejoin="round" stroke-linecap="butt"/>
<polyline points="1103.0,99.0 1187.0,200.0 1290.0,338.0 1444.0,558.0" fill="none" stroke="#ffffff" stroke-width="23.0" stroke-linejoin="round" stroke-linecap="butt"/>
<polyline points="1550.0,102.0 1700.0,301.0" fill="none" stroke="#ffffff" stroke-width="24.0" stroke-linejoin="round" stroke-linecap="butt"/>
<polyline points="1665.0,252.0 1685.0,243.0" fill="none" stroke="#ffffff" stroke-width="6.0" stroke-linejoin="round" stroke-linecap="butt"/>
<polyline points="1056.7,326.9 1057.2,338.5 1060.9,354.2 1069.1,351 1058,340" fill="none" stroke="#1515ff" stroke-opacity=".75" stroke-width="3" stroke-linejoin="round"/>
<circle cx="1056.7" cy="326.9" r="3.3" fill="#1a1aff"/>
<circle cx="1057.2" cy="338.5" r="3.3" fill="#1a1aff"/>
<circle cx="1060.9" cy="354.2" r="3.3" fill="#1a1aff"/>
<text x="565" y="205" font-size="9.5" fill="#6a6a6a" text-anchor="middle" font-weight="normal" >114</text>
<text x="965.7" y="328" font-size="9.5" fill="#6a6a6a" text-anchor="middle" font-weight="normal" >24</text>
<text x="1084.5" y="478" font-size="9.5" fill="#6a6a6a" text-anchor="middle" font-weight="normal" >139</text>
<text x="937.6" y="480" font-size="9.5" fill="#6a6a6a" text-anchor="middle" font-weight="normal" >24Г</text>
<text x="578" y="499" font-size="9.5" fill="#6a6a6a" text-anchor="middle" font-weight="normal" >113/1</text>
<text x="596" y="536" font-size="9.5" fill="#6a6a6a" text-anchor="middle" font-weight="normal" >111/1</text>
<text x="440.6" y="279" font-size="9.5" fill="#6a6a6a" text-anchor="middle" font-weight="normal" >123</text>
<text x="470.2" y="333" font-size="9.5" fill="#6a6a6a" text-anchor="middle" font-weight="normal" >121</text>
<text x="487.4" y="364.5" font-size="9.5" fill="#6a6a6a" text-anchor="middle" font-weight="normal" >119</text>
<text x="503.7" y="384.5" font-size="9.5" fill="#6a6a6a" text-anchor="middle" font-weight="normal" >117</text>
<text x="530" y="447" font-size="9.5" fill="#6a6a6a" text-anchor="middle" font-weight="normal" >115</text>
<text x="484.9" y="493" font-size="9.5" fill="#6a6a6a" text-anchor="middle" font-weight="normal" >21</text>
<text x="453.2" y="513" font-size="9.5" fill="#6a6a6a" text-anchor="middle" font-weight="normal" >19</text>
<text x="517.7" y="548" font-size="9.5" fill="#6a6a6a" text-anchor="middle" font-weight="normal" >20</text>
<text x="1278.5" y="218" font-size="9.5" fill="#6a6a6a" text-anchor="middle" font-weight="normal" >96</text>
<text x="1314" y="252" font-size="9.5" fill="#6a6a6a" text-anchor="middle" font-weight="normal" >94</text>
<text x="1323.4" y="286" font-size="9.5" fill="#6a6a6a" text-anchor="middle" font-weight="normal" >92</text>
<text x="1508.7" y="143" font-size="9.5" fill="#6a6a6a" text-anchor="middle" font-weight="normal" >97</text>
<text x="1533" y="173" font-size="9.5" fill="#6a6a6a" text-anchor="middle" font-weight="normal" >95</text>
<text x="1549" y="198" font-size="9.5" fill="#6a6a6a" text-anchor="middle" font-weight="normal" >93</text>
<text x="1557" y="213" font-size="9.5" fill="#6a6a6a" text-anchor="middle" font-weight="normal" >91</text>
<text x="1377.5" y="333" font-size="9.5" fill="#6a6a6a" text-anchor="middle" font-weight="normal" >90</text>
<text x="1386" y="372" font-size="9.5" fill="#6a6a6a" text-anchor="middle" font-weight="normal" >88</text>
<text x="1396.7" y="392" font-size="9.5" fill="#6a6a6a" text-anchor="middle" font-weight="normal" >86</text>
<text x="1408" y="415" font-size="9.5" fill="#6a6a6a" text-anchor="middle" font-weight="normal" >84</text>
<text x="1421.2" y="438" font-size="9.5" fill="#6a6a6a" text-anchor="middle" font-weight="normal" >82</text>
<text x="1445.5" y="466" font-size="9.5" fill="#6a6a6a" text-anchor="middle" font-weight="normal" >80</text>
<text x="1468" y="502" font-size="9.5" fill="#6a6a6a" text-anchor="middle" font-weight="normal" >78</text>
<text x="1510" y="543" font-size="9.5" fill="#6a6a6a" text-anchor="middle" font-weight="normal" >76</text>
<text x="1657.4" y="355" font-size="9.5" fill="#6a6a6a" text-anchor="middle" font-weight="normal" >83</text>
<text x="1663" y="379" font-size="9.5" fill="#6a6a6a" text-anchor="middle" font-weight="normal" >81</text>
<text x="0" y="0" font-size="11.5" fill="#222" text-anchor="middle" transform="translate(860.5,318) rotate(-39.4)">улица Гоголя</text>
<text x="0" y="0" font-size="11.5" fill="#222" text-anchor="middle" transform="translate(1065,154) rotate(-39.4)">улица Гоголя</text>
<text x="0" y="0" font-size="11.5" fill="#222" text-anchor="middle" transform="translate(1378,457) rotate(55)">улица Луначарского</text>
<text x="0" y="0" font-size="11.5" fill="#222" text-anchor="start" transform="translate(1600,184) rotate(53.5)">Интернациональная улица</text>
<text x="0" y="0" font-size="11.5" fill="#222" text-anchor="start" transform="translate(655,545) rotate(54)">улица Красная</text>
<text x="749.2" y="225.5" font-size="10.5" fill="#9a3aa8" text-anchor="middle" font-weight="normal" stroke="#ffffff" stroke-opacity=".6" stroke-width="2" paint-order="stroke" >Белореченский</text>
<text x="749.2" y="237" font-size="10.5" fill="#9a3aa8" text-anchor="middle" font-weight="normal" stroke="#ffffff" stroke-opacity=".6" stroke-width="2" paint-order="stroke" >хлеб</text>
<text x="1127" y="206.5" font-size="8.7" fill="#d01aa6" text-anchor="middle" font-weight="normal" stroke="#ffffff" stroke-opacity=".6" stroke-width="2" paint-order="stroke" >Центр интегральной</text>
<text x="1127" y="216" font-size="8.7" fill="#d01aa6" text-anchor="middle" font-weight="normal" stroke="#ffffff" stroke-opacity=".6" stroke-width="2" paint-order="stroke" >медицины</text>
<text x="1127" y="225.5" font-size="8.7" fill="#d01aa6" text-anchor="middle" font-weight="normal" stroke="#ffffff" stroke-opacity=".6" stroke-width="2" paint-order="stroke" >"Здравица"</text>
<text x="1190" y="278" font-size="10.5" fill="#3c3c3c" text-anchor="middle" font-weight="normal" font-style="italic" textLength="72" lengthAdjust="spacingAndGlyphs">Строительство</text>
<text x="1190" y="290" font-size="10.5" fill="#3c3c3c" text-anchor="middle" font-weight="normal" font-style="italic" textLength="71" lengthAdjust="spacingAndGlyphs">9-ти этажного</text>
<text x="1190" y="302" font-size="10.5" fill="#3c3c3c" text-anchor="middle" font-weight="normal" font-style="italic" textLength="24" lengthAdjust="spacingAndGlyphs">дома</text>
<text x="1540.4" y="313" font-size="10.5" fill="#2a2f5e" text-anchor="middle" font-weight="normal" stroke="#ffffff" stroke-opacity=".6" stroke-width="2" paint-order="stroke" >Церковь</text>
<text x="1540.4" y="325" font-size="10.5" fill="#2a2f5e" text-anchor="middle" font-weight="normal" stroke="#ffffff" stroke-opacity=".6" stroke-width="2" paint-order="stroke" >Евангельских</text>
<text x="1540.4" y="337" font-size="10.5" fill="#2a2f5e" text-anchor="middle" font-weight="normal" stroke="#ffffff" stroke-opacity=".6" stroke-width="2" paint-order="stroke" >Христиан</text>
<text x="1540.4" y="349" font-size="10.5" fill="#2a2f5e" text-anchor="middle" font-weight="normal" stroke="#ffffff" stroke-opacity=".6" stroke-width="2" paint-order="stroke" >Баптистов</text>
<text x="1628" y="320" font-size="10.5" fill="#9a3aa8" text-anchor="middle" font-weight="normal" stroke="#ffffff" stroke-opacity=".6" stroke-width="2" paint-order="stroke" >Строитель</text>
<text x="1628" y="332" font-size="10.5" fill="#9a3aa8" text-anchor="middle" font-weight="normal" stroke="#ffffff" stroke-opacity=".6" stroke-width="2" paint-order="stroke" >Юг</text>
<path d="M1536.4,286v13M1532,290.5h9" stroke="#111" stroke-width="2" fill="none"/>
<g fill="#d6199f"><rect x="1120.5" y="186" width="12" height="8" rx="1.5"/><path d="M1123.5,186a3,3 0 0 1 6,0h-1.5a1.5,1.5 0 0 0 -3,0z"/></g><path d="M1126.5,187.5v5M1124,190h5" stroke="#fff" stroke-width="1.5"/>
<path d="M742.5,210.5 v-3.5 c0,-2 1.5,-3 3,-3 c1,0 1.5,.8 2,.8 c.5,0 1,-.8 2,-.8 c1,0 1.5,.8 2,.8 c.5,0 1,-.8 2,-.8 c1.5,0 3,1 3,3 v3.5z" fill="#a83ab8"/><path d="M745,205.5l1,2M748.5,205l1,2.5M752,205l1,2.5" stroke="#e8c8ee" stroke-width=".8"/>
<g fill="#b541c0"><path d="M1622,293h3v3h1v-3h2v4c0,2 -1,3 -2,3v6h-2v-6c-1,0 -2,-1 -2,-3z"/><path d="M1630,293c2,0 3,2 3,5l-1,2v6h-2z"/></g>
<text x="1675" y="540" font-size="9.6" font-weight="bold" fill="#111" text-anchor="end" stroke="#fff" stroke-width="2" stroke-opacity=".6" paint-order="stroke" font-family="Liberation Sans" textLength="181" lengthAdjust="spacing">N 44° 44.6574' : E 039° 49.8211'</text>
<g stroke="#111" stroke-width="2" fill="none"><path d="M443,513.5v25M443,525h75M492.5,513.5v11.5M517.5,525v13.5"/></g>
<text x="467.5" y="522" font-size="9.5" font-weight="bold" letter-spacing=".5" fill="#111" text-anchor="middle" stroke="#fff" stroke-width="2" stroke-opacity=".7" paint-order="stroke">20 m</text>
<text x="480.5" y="536" font-size="9.5" font-weight="bold" letter-spacing=".5" fill="#111" text-anchor="middle" stroke="#fff" stroke-width="2" stroke-opacity=".7" paint-order="stroke">100 ft</text>
</svg>
<!-- map controls -->
<div class="a" style="left:462px;top:246px;width:10px;height:171px;background:rgba(95,95,95,.72);border-radius:5px"></div>
<div class="pb" style="left:455px;top:130px"><svg width="24" height="24"><path d="M7,14l5,-5 5,5" stroke="#fff" stroke-width="2.6" fill="none"/></svg></div>
<div class="pb" style="left:441px;top:156px"><svg width="24" height="24"><path d="M14,7l-5,5 5,5" stroke="#fff" stroke-width="2.6" fill="none"/></svg></div>
<div class="pb" style="left:468px;top:156px"><svg width="24" height="24"><path d="M10,7l5,5 -5,5" stroke="#fff" stroke-width="2.6" fill="none"/></svg></div>
<div class="pb" style="left:455px;top:184px"><svg width="24" height="24"><path d="M7,10l5,5 5,-5" stroke="#fff" stroke-width="2.6" fill="none"/></svg></div>
<div class="pb" style="left:455px;top:215px"><svg width="24" height="24"><path d="M12,6v12M6,12h12" stroke="#fff" stroke-width="3" fill="none"/></svg></div>
<div class="a" style="left:457px;top:236px;width:20px;height:20px;border-radius:50%;background:radial-gradient(circle at 50% 30%,#fdfdfd,#e6e6e6 70%,#cfcfcf);box-shadow:0 1px 1px rgba(0,0,0,.35)"></div>
<div class="pb" style="left:455px;top:418px"><svg width="24" height="24"><path d="M6,12h12" stroke="#fff" stroke-width="3" fill="none"/></svg></div>
<!-- wialon map logo -->
<div class="a" style="left:1629px;top:127px;width:45px;height:45px;border-radius:50%;background:radial-gradient(circle,rgba(255,255,255,1) 38%,rgba(255,255,255,.55) 55%,rgba(255,255,255,0) 71%)"></div>
<svg class="a" style="left:1630px;top:128px" width="43" height="43" viewBox="0 0 43 43"><path d="M19.85,12.14 A9.5,9.5 0 0 0 12.32,23.96" fill="none" stroke="#e8264a" stroke-width="3.4" stroke-linecap="round"/><path d="M14.2,25.8 Q19,32.5 26.5,29.6" fill="none" stroke="#e8264a" stroke-width="3.2" stroke-linecap="round"/><path d="M24.75,12.57 A9.5,9.5 0 0 1 29.28,26.95" fill="none" stroke="#1d5a9c" stroke-width="3" stroke-linecap="round"/></svg>


<!-- TABLE PANEL -->
<div class="a" style="left:431px;top:557px;width:1248px;height:434px;border:1px solid #8f8f8f;background:#fff"></div>
<div class="a" style="left:436px;top:560px;width:28px;height:22px;border-radius:5px;background:#9d9d9d;border:1px solid #6a6a6a;box-shadow:inset 0 0 0 1px #b5b5b5"></div>
<svg class="a" style="left:441px;top:562px" width="18" height="18" viewBox="0 0 18 18"><rect x="1.5" y="2.5" width="15" height="13" fill="#eee" stroke="#555"/><path d="M1.5,5.5h15M1.5,9h15M1.5,12.5h15M5.5,5.5v10M9,5.5v10M12.5,5.5v10" stroke="#777" stroke-width=".8"/></svg>
<svg class="a" style="left:478px;top:562px" width="20" height="18" viewBox="0 0 20 18"><defs><linearGradient id="bar" x1="0" y1="0" x2="1" y2="0"><stop offset="0" stop-color="#ffffff"/><stop offset="1" stop-color="#cfcfcf"/></linearGradient></defs><rect x="1.5" y="10.5" width="3.5" height="6" fill="url(#bar)" stroke="#666" stroke-width=".9"/><rect x="5" y="5.5" width="3.5" height="11" fill="url(#bar)" stroke="#666" stroke-width=".9"/><rect x="8.5" y="1.5" width="3.5" height="15" fill="url(#bar)" stroke="#666" stroke-width=".9"/><rect x="12" y="4.5" width="3.5" height="12" fill="url(#bar)" stroke="#666" stroke-width=".9"/></svg>
<div class="a" style="left:433px;top:588px;width:1245px;height:27px;background:#e8e8e8;border-top:1px solid #d4d4d4"></div>
<div class="a th" style="left:457px;top:595px">Время</div>
<div class="a th" style="left:585px;top:595px;width:36px;overflow:hidden">Скорость</div>
<div class="a th" style="left:628px;top:595px">Параметры</div>
<div class="a" style="left:433px;top:615px;width:1245px;height:26px;background:#ffffff"></div>
<div class="a td" style="left:439px;top:621px">1</div>
<div class="a td" style="left:458px;top:621px;letter-spacing:.12px">2015-11-10 02:46:00</div>
<div class="a td" style="left:585px;top:621px">0</div>
<div class="a td" style="left:628px;top:621px;width:1049px;overflow:hidden">ID=0, vs0=0, vs1=0, vs2=0, vs3=0, gsm_status=0, nav_status=0, ms=0, sim_n=0, sim_p=1, ss0=0, ss1=0, ss2=0, pwr_in=3, pwr_ext=12200, pwr_int=4223, avl_driver=0, im1=400, im2=600, im3=0, I/O=0/0</div>
<div class="a" style="left:433px;top:641px;width:1245px;height:26px;background:#f5f5f5"></div>
<div class="a td" style="left:439px;top:647px">2</div>
<div class="a td" style="left:458px;top:647px;letter-spacing:.12px">2015-11-10 02:46:33</div>
<div class="a td" style="left:585px;top:647px">0</div>
<div class="a td" style="left:628px;top:647px;width:1049px;overflow:hidden">ID=0, vs0=0, vs1=0, vs2=0, vs3=0, gsm_status=3, nav_status=2, ms=0, sim_n=0, sim_p=1, ss0=0, ss1=0, ss2=0, pwr_in=3, pwr_ext=12000, gsm=17, mcc=250, mnc=1, pwr_int=4240, avl_driver=0</div>
<div class="a" style="left:433px;top:667px;width:1245px;height:26px;background:#ffffff"></div>
<div class="a td" style="left:439px;top:673px">3</div>
<div class="a td" style="left:458px;top:673px;letter-spacing:.12px">2015-11-10 02:49:59</div>
<div class="a td" style="left:585px;top:673px">0</div>
<div class="a td" style="left:628px;top:673px;width:1049px;overflow:hidden">ID=0, vs0=0, vs1=0, vs2=0, vs3=0, gsm_status=0, nav_status=1, ms=0, sim_n=0, sim_p=0, ss0=0, ss1=0, ss2=0, pwr_in=0, pwr_ext=0, pwr_int=0, avl_driver=0, im1=203, im2=502, im3=311, I/O=0/0</div>
<div class="a" style="left:433px;top:693px;width:1245px;height:26px;background:#f5f5f5"></div>
<div class="a td" style="left:439px;top:699px">4</div>
<div class="a td" style="left:458px;top:699px;letter-spacing:.12px">2015-11-10 02:50:14</div>
<div class="a td" style="left:585px;top:699px">---</div>
<div class="a td" style="left:628px;top:699px;width:1049px;overflow:hidden">hard_st=20095, iccid_1=8970113008609635490, id=51547</div>
<div class="a" style="left:433px;top:719px;width:1245px;height:26px;background:#ffffff"></div>
<div class="a td" style="left:439px;top:725px">5</div>
<div class="a td" style="left:458px;top:725px;letter-spacing:.12px">2015-11-10 02:50:14</div>
<div class="a td" style="left:585px;top:725px">0</div>
<div class="a td" style="left:628px;top:725px;width:1049px;overflow:hidden">ID=0, vs0=0, vs1=0, vs2=0, vs3=0, gsm_status=0, nav_status=3, ms=0, sim_n=0, sim_p=1, ss0=0, ss1=0, ss2=0, pwr_in=3, pwr_ext=12000, pwr_int=4239, avl_driver=0, im1=318, I/O=0/0</div>
<div class="a" style="left:433px;top:745px;width:1245px;height:26px;background:#f5f5f5"></div>
<div class="a td" style="left:439px;top:751px">6</div>
<div class="a td" style="left:458px;top:751px;letter-spacing:.12px">2015-11-10 02:54:13</div>
<div class="a td" style="left:585px;top:751px">0</div>
<div class="a td" style="left:628px;top:751px;width:1049px;overflow:hidden">ID=0, vs0=0, vs1=0, vs2=0, vs3=0, gsm_status=3, nav_status=3, ms=0, sim_n=0, sim_p=1, ss0=0, ss1=0, ss2=0, pwr_in=3, pwr_ext=12000, gsm=12, mcc=250, mnc=1, pwr_int=4227, avl_driver=0</div>
<div class="a" style="left:433px;top:771px;width:1245px;height:26px;background:#ececec"></div>
<div class="a td" style="left:439px;top:777px">7</div>
<div class="a td" style="left:458px;top:777px;letter-spacing:.12px">2015-11-10 02:56:17</div>
<div class="a td" style="left:585px;top:777px">0</div>
<div class="a td" style="left:628px;top:777px;width:1049px;overflow:hidden">ID=0, vs0=0, vs1=0, vs2=0, vs3=0, gsm_status=0, nav_status=1, ms=0, sim_n=0, sim_p=1, ss0=0, ss1=0, ss2=0, pwr_in=3, pwr_ext=12000, pwr_int=4232, avl_driver=0, im1=9600, im2=311, I/O=0/0</div>
<div class="a" style="left:433px;top:797px;width:1245px;height:26px;background:#f5f5f5"></div>
<div class="a td" style="left:439px;top:803px">8</div>
<div class="a td" style="left:458px;top:803px;letter-spacing:.12px">2015-11-10 02:56:19</div>
<div class="a td" style="left:585px;top:803px">---</div>
<div class="a td" style="left:628px;top:803px;width:1049px;overflow:hidden">hard_st=20095, iccid_1=8970113008609635490, id=51547</div>
<div class="a" style="left:433px;top:823px;width:1245px;height:26px;background:#ffffff"></div>
<div class="a td" style="left:439px;top:829px">9</div>
<div class="a td" style="left:458px;top:829px;letter-spacing:.12px">2015-11-10 02:56:27</div>
<div class="a td" style="left:585px;top:829px">0</div>
<div class="a td" style="left:628px;top:829px;width:1049px;overflow:hidden">ID=0, vs0=0, vs1=0, vs2=0, vs3=0, gsm_status=2, nav_status=3, ms=0, sim_n=0, sim_p=1, ss0=0, ss1=0, ss2=0, pwr_in=3, pwr_ext=12000, gsm=17, mcc=250, mnc=1, pwr_int=4230, avl_driver=0</div>
<div class="a" style="left:451px;top:588px;width:1px;height:261px;background:#dedede"></div>
<div class="a" style="left:578px;top:588px;width:1px;height:261px;background:#dedede"></div>
<div class="a" style="left:621px;top:588px;width:1px;height:261px;background:#dedede"></div>
<div class="a" style="left:433px;top:849px;width:1245px;height:1px;background:#d2d2d2"></div>

<!-- horizontal scrollbar -->
<div class="a" style="left:432px;top:945px;width:1246px;height:16px;background:#f1f1f1"></div>
<div class="a" style="left:449px;top:947px;width:964px;height:12px;background:#c1c1c1"></div>
<svg class="a" style="left:436px;top:948px" width="8" height="10"><path d="M6,1v8l-4.5,-4z" fill="#a3a3a3"/></svg>
<svg class="a" style="left:1663px;top:948px" width="8" height="10"><path d="M2,1v8l4.5,-4z" fill="#505050"/></svg>
<!-- pager toolbar -->
<div class="a" style="left:432px;top:961px;width:1246px;height:29px;background:#ededed;border-top:1px solid #d8d8d8"></div>
<svg class="a" style="left:438px;top:966px" width="20" height="20" viewBox="0 0 20 20"><path d="M7,9l3,-6 3,6" stroke="#d8265a" stroke-width="2" fill="none"/><path d="M3,15h14M3,15l3,-2.5M3,15l3,2.5M17,15l-3,-2.5M17,15l-3,2.5" stroke="#333" stroke-width="1.5" fill="none"/></svg>
<div class="a" style="left:468px;top:965px;width:59px;height:22px;background:#fff;border:1px solid #c3c3c3;padding-left:5px;line-height:20px;font-size:12.5px;color:#222">1000<div style="position:absolute;right:5px;top:9px;border-left:5px solid transparent;border-right:5px solid transparent;border-top:5px solid #111"></div></div>
<div class="sep" style="left:533px;top:964px;height:24px"></div>
<svg class="a" style="left:542px;top:968px" width="40" height="16" viewBox="0 0 40 16"><rect x="2" y="2" width="2" height="12" fill="#2d7fd4"/><path d="M4.5,8l11,-6v12z" fill="#2d7fd4"/><path d="M25,8l11,-6v12z" fill="#2d7fd4"/></svg>
<div class="sep" style="left:589px;top:964px;height:24px"></div>
<div class="a" style="left:599px;top:969px;font-size:12.25px;color:#222">Стр.</div>
<div class="a" style="left:628px;top:965px;width:60px;height:22px;background:#fff;border:1px solid #c3c3c3;padding-left:5px;line-height:20px;font-size:12.5px;color:#222">1</div>
<div class="a" style="left:692px;top:969px;font-size:12.25px;color:#222">из 1</div>
<div class="sep" style="left:720px;top:964px;height:24px"></div>
<svg class="a" style="left:732px;top:968px" width="40" height="16" viewBox="0 0 40 16"><path d="M2.5,2l11,6 -11,6z" fill="#2d7fd4"/><path d="M22.5,2l11,6 -11,6z" fill="#2d7fd4"/><rect x="34.5" y="2" width="2" height="12" fill="#2d7fd4"/></svg>
<div class="sep" style="left:778px;top:964px;height:24px"></div>
<div class="a" style="left:794px;top:970px;font-size:12.25px;color:#222">Отображается с 1 по 9 из 9 сообщений</div>
<div class="sep" style="left:1029px;top:964px;height:24px"></div>
<div class="a" style="left:1037px;top:965px;width:89px;height:22px;background:#fff;border:1px solid #c3c3c3"></div>
<div class="a" style="left:1131px;top:965px;width:28px;height:22px;border:1px solid #b3b3b3;border-radius:6px;background:linear-gradient(#fbfbfb,#e6e6e6)"></div>
<svg class="a" style="left:1136px;top:967px" width="18" height="18" viewBox="0 0 18 18"><path d="M2,3.5h14l-5,6v6l-4,-2v-4z" fill="#6fb6e6" stroke="#2a5f8a" stroke-width="1.2"/></svg>
<div class="sep" style="left:1165px;top:964px;height:24px"></div>
<svg class="a" style="left:1178px;top:969px" width="14" height="14" viewBox="0 0 14 14"><path d="M2.5,2.5l9,9M11.5,2.5l-9,9" stroke="#e01818" stroke-width="2.4"/></svg>
<div class="sep" style="left:1201px;top:964px;height:24px"></div>

<!-- STATUS BAR -->
<div class="a" style="left:0;top:991px;width:1680px;height:2px;background:#fff"></div>
<div class="a" style="left:1px;top:993px;width:1679px;height:28px;background:#9a9b9e"></div>
<div class="a" style="left:0;top:1021px;width:1680px;height:2px;background:#fbfbfb"></div>
<div class="a" style="left:0;top:1023px;width:1680px;height:3px;background:#dcd8cf"></div>
<svg class="a" style="left:0;top:993px" width="1680" height="28" viewBox="0 993 1680 28">
<path d="M38,995v24M76,995v24M1298.5,995v24M1476.5,995v24M1557.5,995v24" stroke="#b4b5b8" stroke-width="1"/>
<path d="M37,995v24M75,995v24M1297.5,995v24M1475.5,995v24M1556.5,995v24" stroke="#8c8d90" stroke-width="1"/>
<rect x="12.5" y="998.5" width="15" height="16" fill="#a9d4f2" stroke="#1f4f7a"/><path d="M20,998.5v16" stroke="#1f4f7a"/>
<rect x="49.5" y="998.5" width="15" height="16" fill="#fff" stroke="#333"/><path d="M49.5,1003.8h15M49.5,1009.2h15M54.5,998.5v16M59.5,998.5v16" stroke="#333" stroke-width="1.4"/>
<rect x="95" y="1000" width="17" height="12" fill="#c4c4c4" stroke="#8a8a8a"/><path d="M112,1003h5l3,4v5h-8z" fill="#aaa" stroke="#8a8a8a"/><circle cx="100" cy="1013" r="2.2" fill="#777"/><circle cx="115" cy="1013" r="2.2" fill="#777"/><path d="M92,1015h28" stroke="#8a8a8a"/>
<rect x="143" y="1001" width="16" height="11" fill="#aee0ff" stroke="#1f4f7a"/><path d="M159,1004h5l3,4v4h-8z" fill="#3a6f96" stroke="#1f4f7a"/><circle cx="147" cy="1013" r="2.2" fill="#1f3f5a"/><circle cx="163" cy="1013" r="2.2" fill="#1f3f5a"/>
<text x="137" y="1002" font-size="8" font-weight="bold" fill="#1f2f4a">NAME</text>
<rect x="190" y="1001" width="16" height="11" fill="#aee0ff" stroke="#1f4f7a"/><path d="M206,1004h5l3,4v4h-8z" fill="#3a6f96" stroke="#1f4f7a"/><circle cx="194" cy="1013" r="2.2" fill="#1f3f5a"/><circle cx="210" cy="1013" r="2.2" fill="#1f3f5a"/>
<path d="M211,1001h4v-2l4,3.5 -4,3.5v-2h-4z" fill="#222"/>
<path d="M718,1003l4,4 -4,4M798,1003l4,4 -4,4" stroke="#e8e8e8" fill="none" stroke-width="1.1"/>
<text x="730" y="1012.5" font-size="13.5" fill="#fff">©</text>
<text x="743" y="1012" font-size="11.8" font-weight="bold" fill="#fff" textLength="41">Gurtam</text>
<rect x="1315.5" y="1002.5" width="16" height="11" rx="1" fill="#e8e8e8" stroke="#555"/><path d="M1318,1006h6M1318,1009h10" stroke="#555"/>
<circle cx="1345" cy="1007.5" r="9.5" fill="#7b7b7b"/><text x="1345" y="1012" font-size="12" fill="#e8e8e8" text-anchor="middle">0</text>
<rect x="1368.5" y="1002.5" width="12" height="10" fill="#eee" stroke="#555"/><path d="M1376,1005h7v-3l5,5 -5,5v-3h-7z" fill="#fff" stroke="#555"/><path d="M1386,999l4,-3v2h3v2h-3v2z" fill="#fff"/>
<circle cx="1400" cy="1007.5" r="9.5" fill="#7b7b7b"/><text x="1400" y="1012" font-size="12" fill="#e8e8e8" text-anchor="middle">0</text>
<rect x="1425.5" y="1001.5" width="16" height="12" fill="#ddd" stroke="#555"/><path d="M1426,1013l5,-6 3,3 3,-4 4,7z" fill="#666"/>
<circle cx="1455" cy="1007.5" r="9.5" fill="#7b7b7b"/><text x="1455" y="1012" font-size="12" fill="#e8e8e8" text-anchor="middle">0</text>
<path d="M1488.5,1001.5h8v12h-8zM1497.5,1001.5h8v12h-8z" fill="#dcefff" stroke="#1f5a8a"/><path d="M1490,1005h5M1490,1008h5" stroke="#1f5a8a"/>
<rect x="1529" y="1001" width="16" height="13" fill="#3b8fd0"/><rect x="1529" y="1001" width="8" height="4" fill="#c33"/><rect x="1529" y="1005" width="8" height="4" fill="#7a4a1a"/><rect x="1529" y="1009" width="8" height="5" fill="#e6a21a"/><path d="M1537,1001v13M1529,1005h16M1529,1009h16" stroke="#fff"/>
<text x="1578" y="1012.5" font-size="12.2" fill="#fff">15:46:15 (+03)</text>
</svg>

</body></html>
